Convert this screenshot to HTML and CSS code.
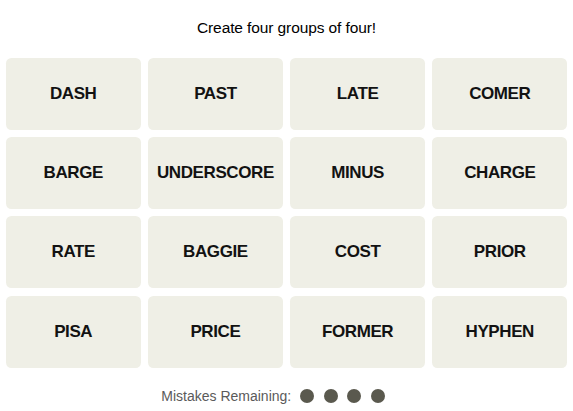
FILE: index.html
```html
<!DOCTYPE html>
<html>
<head>
<meta charset="utf-8">
<link rel="stylesheet" href="styles.css">
</head>
<body>
<main class="game">
  <p class="prompt">Create four groups of four!</p>
  <div class="board">
    <button class="tile">DASH</button>
    <button class="tile">PAST</button>
    <button class="tile">LATE</button>
    <button class="tile">COMER</button>
    <button class="tile">BARGE</button>
    <button class="tile">UNDERSCORE</button>
    <button class="tile">MINUS</button>
    <button class="tile">CHARGE</button>
    <button class="tile">RATE</button>
    <button class="tile">BAGGIE</button>
    <button class="tile">COST</button>
    <button class="tile">PRIOR</button>
    <button class="tile">PISA</button>
    <button class="tile">PRICE</button>
    <button class="tile">FORMER</button>
    <button class="tile">HYPHEN</button>
  </div>
  <div class="mistakes">
    <span class="mistakes-label">Mistakes Remaining:</span>
    <span class="dots">
      <span class="dot"></span>
      <span class="dot"></span>
      <span class="dot"></span>
      <span class="dot"></span>
    </span>
  </div>
</main>
</body>
</html>
```
FILE: styles.css
```css
html, body {
  margin: 0;
  padding: 0;
  background: #ffffff;
}

.game {
  font-family: "Liberation Sans", Arial, sans-serif;
  color: #121212;
}

.prompt {
  margin: 18px 0 0;
  height: 20px;
  line-height: 20px;
  font-size: 15.5px;
  letter-spacing: -0.1px;
  text-align: center;
  color: #000000;
}

.board {
  margin-top: 20px;
  display: grid;
  grid-template-columns: repeat(4, 135px);
  grid-auto-rows: 72px;
  gap: 7.2px;
  justify-content: center;
}

.tile {
  border: none;
  margin: 0;
  padding: 0;
  background: #efefe6;
  border-radius: 5.4px;
  font-family: "Liberation Sans", Arial, sans-serif;
  font-weight: 700;
  font-size: 17px;
  letter-spacing: -0.4px;
  color: #121212;
  display: flex;
  align-items: center;
  justify-content: center;
}

.mistakes {
  margin-top: 18.4px;
  height: 20px;
  display: flex;
  align-items: center;
  justify-content: center;
  gap: 9px;
  padding-right: 27px;
}

.mistakes-label {
  font-size: 14px;
  color: #5a5a5a;
}

.dots {
  display: flex;
  gap: 9.5px;
}

.dot {
  width: 14px;
  height: 14px;
  border-radius: 50%;
  background: #5a594e;
}
```
